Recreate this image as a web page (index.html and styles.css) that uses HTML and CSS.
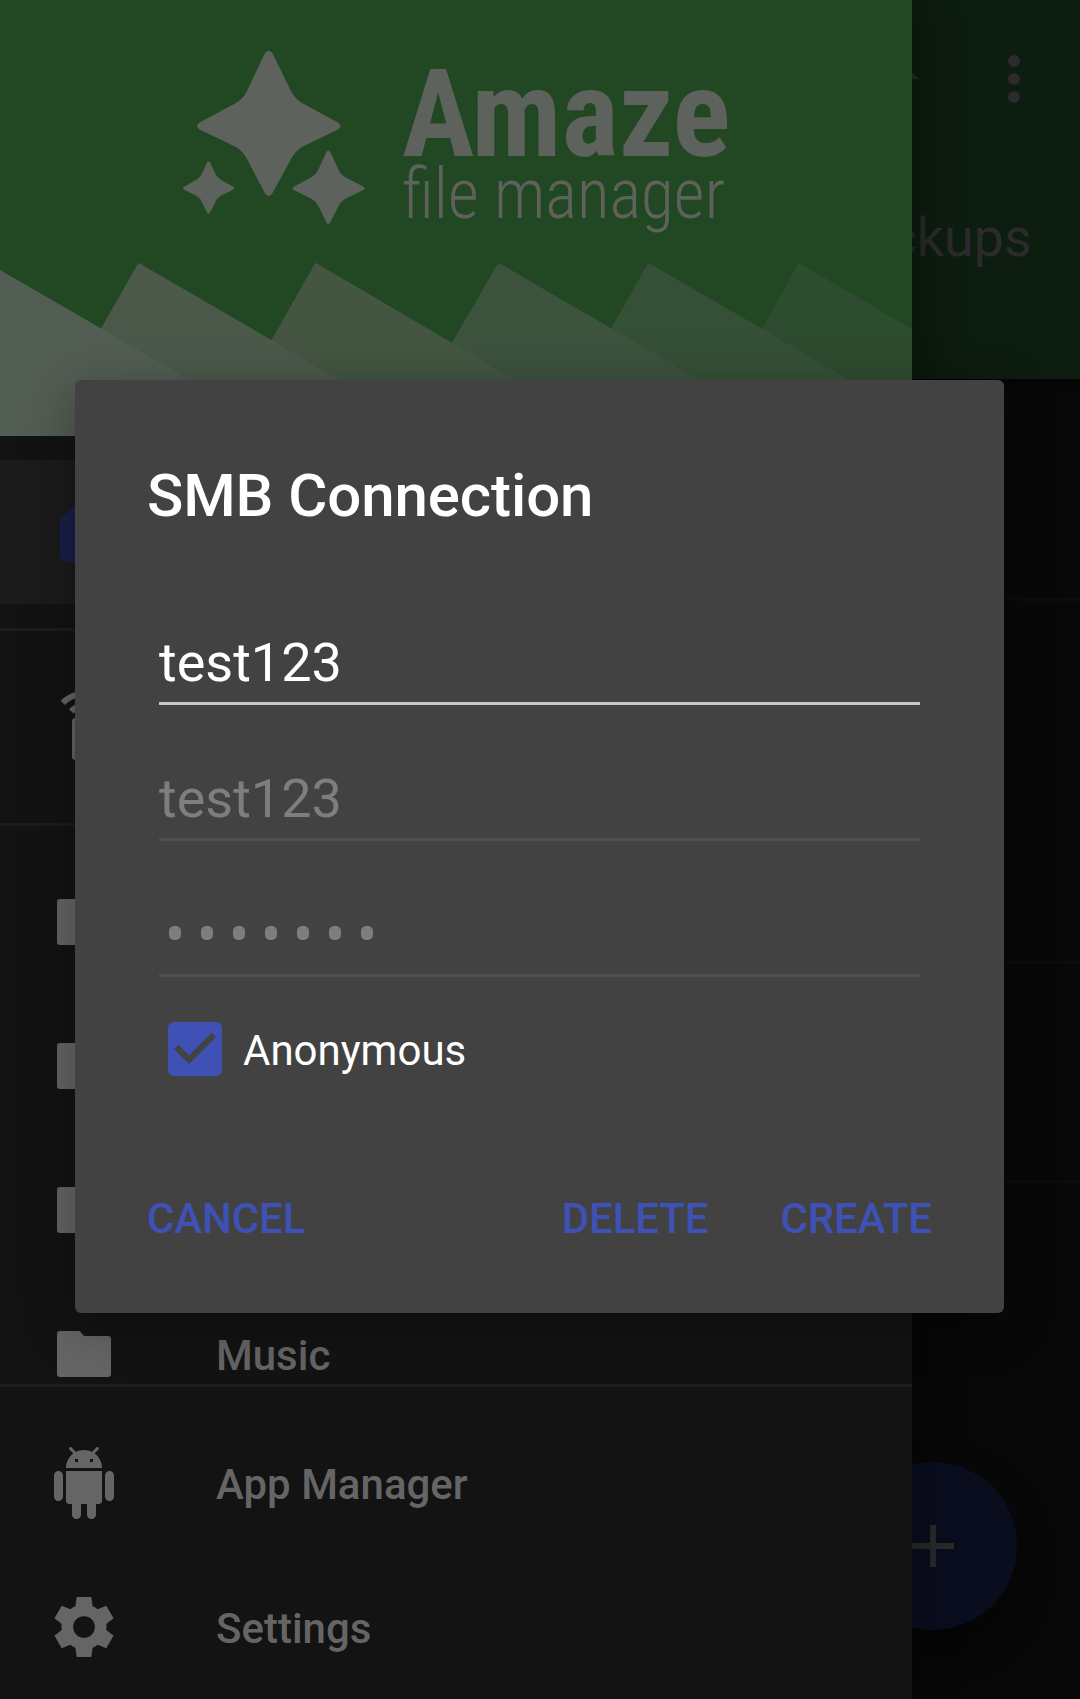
FILE: index.html
```html
<!DOCTYPE html>
<html lang="en">
<head>
<meta charset="utf-8">
<title>Amaze file manager</title>
<link rel="stylesheet" href="styles.css">
</head>
<body>
<div class="screen">
  <main class="browser">
    <header class="toolbar">
      <div class="toolbar-actions">
        <svg width="72" height="72" viewBox="0 0 24 24"><path d="M10 20v-6h4v6h5v-8h3L12 3 2 12h3v8z"/></svg>
        <svg width="72" height="72" viewBox="0 0 24 24"><circle cx="12" cy="6" r="2"/><circle cx="12" cy="12" r="2"/><circle cx="12" cy="18" r="2"/></svg>
      </div>
      <div class="path">ckups</div>
    </header>
    <div class="file-list">
      <div class="file file-first"></div>
      <div class="file file-tall"></div>
      <div class="file"></div>
    </div>
    <button class="fab" aria-label="Add"><svg width="72" height="72" viewBox="0 0 24 24"><path d="M19 13h-6v6h-2v-6H5v-2h6V5h2v6h6z"/></svg></button>
  </main>

  <nav class="drawer">
    <svg class="banner" width="912" height="436" viewBox="0 0 912 436">
      <rect width="912" height="436" fill="#224723"/>
      <path fill="#2e4c2f" d="M798.9 262.7 912 329v107H702z"/>
      <path fill="#365037" d="M648.4 262.7 761.2 328.3 945 436H550z"/>
      <path fill="#3d533e" d="M498.3 262.7 611 328.3 796 436H398z"/>
      <path fill="#445642" d="M315.4 262.7 452 342.7 610 436H217z"/>
      <path fill="#4b594b" d="M138.4 262.7 271.3 340 435 436H40z"/>
      <path fill="#525d53" d="M0 270 100.9 328.3 285 436H0z"/>
      <g fill="#5d625d">
        <path d="M264.8 53.5Q268.7 48 272.6 53.5L290.500 90Q294 98 302 103L338 122.500Q343 126 338 129.500L302 147Q295 151 290.500 160L272.600 193Q268.700 199 264.800 193L247.500 160Q243 151 236 147L199.500 129.500Q194.500 126 199.500 122.500L236 103Q244 98 247.500 90Z"/>
        <path d="M207.200 162.300Q208.600 160.300 210 162.300L215.500 174Q217 177.500 220.500 179.500L233.500 187Q235 188.200 233.500 189.400L220.500 196Q217 198 215.500 202L210 212.400Q208.600 214.400 207.200 212.400L201.700 202Q200.200 198 196.700 196L183.700 189.400Q182.200 188.200 183.700 187L196.700 179.500Q200.200 177.500 201.700 174Z"/>
        <path d="M326.500 152Q328.400 149.200 330.300 152L338.500 169.500Q340.500 174.500 345 177L363.500 186.700Q365.500 188.300 363.500 189.900L345 199Q340.500 201.500 338.500 206L330.300 222.600Q328.400 225.400 326.500 222.600L318.300 206Q316.300 201.500 311.800 199L293.700 189.900Q291.700 188.300 293.700 186.700L311.800 177Q316.300 174.500 318.300 169.500Z"/>
        <text class="brand-name" x="402" y="155.500" textLength="328.500" lengthAdjust="spacingAndGlyphs">Amaze</text>
        <text class="brand-sub" x="402" y="217.700" textLength="323" lengthAdjust="spacingAndGlyphs">ﬁle manager</text>
      </g>
    </svg>

    <div class="menu">
      <section class="group">
        <div class="item item-selected"><svg width="72" height="72" viewBox="0 0 24 24"><path d="M18 2h-8L4 8v12c0 1.100.9 2 2 2h12c1.100 0 2-.9 2-2V4c0-1.100-.9-2-2-2z"/></svg></div>
      </section>
      <section class="group">
        <div class="item"><svg width="72" height="72" viewBox="0 0 24 24"><path d="M15 9H9c-.55 0-1 .45-1 1v12c0 .55.45 1 1 1h6c.55 0 1-.45 1-1V10c0-.55-.45-1-1-1zM7.050 6.050l1.410 1.410C9.370 6.560 10.620 6 12 6s2.630.56 3.540 1.460l1.410-1.410C15.680 4.780 13.930 4 12 4s-3.680.78-4.950 2.050zM12 0C8.960 0 6.210 1.230 4.220 3.220l1.410 1.410C7.260 3.010 9.510 2 12 2s4.740 1.010 6.360 2.640l1.410-1.410C17.790 1.230 15.040 0 12 0z"/></svg></div>
      </section>
      <section class="group">
        <div class="item"><svg width="72" height="72" viewBox="0 0 72 72"><path d="M12 13h20l4 5h24q3 0 3 3v35q0 3-3 3H12q-3 0-3-3V16q0-3 3-3z"/></svg></div>
        <div class="item"><svg width="72" height="72" viewBox="0 0 72 72"><path d="M12 13h20l4 5h24q3 0 3 3v35q0 3-3 3H12q-3 0-3-3V16q0-3 3-3z"/></svg></div>
        <div class="item"><svg width="72" height="72" viewBox="0 0 72 72"><path d="M12 13h20l4 5h24q3 0 3 3v35q0 3-3 3H12q-3 0-3-3V16q0-3 3-3z"/></svg></div>
        <div class="item"><svg width="72" height="72" viewBox="0 0 72 72"><path d="M12 13h19q1 0 1.500 1l3.500 4h24q3 0 3 3v35q0 3-3 3H12q-3 0-3-3V16q0-3 3-3z"/></svg><span>Music</span></div>
      </section>
    </div>
    <div class="drawer-footer">
      <div class="item"><svg width="72" height="72" viewBox="0 0 24 24"><path d="M6 18c0 .55.45 1 1 1h1v3.500c0 .83.67 1.500 1.500 1.500s1.500-.67 1.500-1.500V19h2v3.500c0 .83.67 1.500 1.500 1.500s1.500-.67 1.500-1.500V19h1c.55 0 1-.45 1-1V8H6v10zM3.500 8C2.670 8 2 8.670 2 9.500v7c0 .83.67 1.500 1.500 1.500S5 17.330 5 16.500v-7C5 8.670 4.330 8 3.500 8zm17 0c-.83 0-1.500.67-1.500 1.500v7c0 .83.67 1.500 1.500 1.500s1.500-.67 1.500-1.500v-7c0-.83-.67-1.500-1.500-1.500zm-4.970-5.840l1.300-1.300c.2-.2.2-.51 0-.71-.2-.2-.51-.2-.71 0l-1.480 1.480C13.850 1.230 12.950 1 12 1c-.96 0-1.860.23-2.660.63L7.850.15c-.2-.2-.51-.2-.71 0-.2.2-.2.51 0 .71l1.310 1.310C6.970 3.260 6 5.010 6 7h12c0-1.990-.97-3.750-2.470-4.840zM10 5H9V4h1v1zm5 0h-1V4h1v1z"/></svg><span>App Manager</span></div>
      <div class="item"><svg width="72" height="72" viewBox="0 0 24 24"><path d="M19.430 12.980c.04-.32.07-.64.07-.98s-.03-.66-.07-.98L21.850 9.110 19.430 4.890 16.560 6.050C16.040 5.650 15.480 5.320 14.870 5.070L14.440 2H9.560L9.130 5.070C8.520 5.320 7.960 5.660 7.440 6.050L4.570 4.890 2.150 9.110 4.570 11.020C4.530 11.340 4.500 11.670 4.500 12s.03.66.07.98L2.150 14.890 4.570 19.110 7.440 17.950c.52.4 1.080.73 1.690.98L9.560 22h4.880l.43-3.070c.61-.25 1.170-.59 1.690-.98l2.870 1.160 2.420-4.220zM12 15.600a3.600 3.600 0 1 1 0-7.200 3.600 3.600 0 0 1 0 7.200z"/></svg><span>Settings</span></div>
    </div>
  </nav>

  <div class="dialog" role="dialog">
    <h1>SMB Connection</h1>
    <div class="field">test123</div>
    <div class="field field-disabled">test123</div>
    <div class="field field-disabled field-password"><i></i><i></i><i></i><i></i><i></i><i></i><i></i></div>
    <label class="check">
      <svg width="54" height="54" viewBox="3 3 18 18"><rect x="3" y="3" width="18" height="18" rx="2" fill="#3f51b5"/><path fill="#424242" d="M10 17l-5-5 1.410-1.410L10 14.170l7.590-7.590L19 8z"/></svg>
      <span>Anonymous</span>
    </label>
    <div class="actions"><button>CANCEL</button><span class="spacer"></span><button>DELETE</button><button>CREATE</button></div>
  </div>
</div>
</body>
</html>
```
FILE: styles.css
```css
* { box-sizing: border-box; }
body { margin: 0; background: #070707; font-family: Roboto, sans-serif; }
button { border: 0; padding: 0; background: none; font: inherit; }
svg { display: block; flex: none; }

.screen { display: grid; grid-template-columns: 1080px; grid-template-rows: 1699px; width: 1080px; height: 1699px; overflow: hidden; }
.browser, .drawer, .dialog { grid-area: 1 / 1; }

.browser { position: relative; z-index: 0; display: flex; flex-direction: column; background: #080808; }
.toolbar { height: 379px; background: #0d1d0f; fill: #2b2a2c; color: #2b2a2c; box-shadow: 0 3px 8px rgba(0, 0, 0, .5); }
.toolbar-actions { display: flex; justify-content: flex-end; gap: 53px; padding: 43px 30px 0 0; }
.path { padding: 91px 48px 0 0; text-align: right; font-size: 54px; line-height: 63px; }
.file { height: 219px; border-bottom: 3px solid #0c0c0c; }
.file-first { height: 222px; }
.file-tall { height: 363px; }
.fab { position: absolute; left: 849px; top: 1462px; width: 168px; height: 168px; border-radius: 50%; display: grid; place-items: center; background: #0a0d1e; fill: #2a2a2a; box-shadow: 0 18px 36px rgba(0, 0, 0, .5); }

.drawer { z-index: 1; width: 912px; height: 1699px; display: flex; flex-direction: column; background: #131313; box-shadow: 0 0 48px rgba(0, 0, 0, .45); }
.brand-name { font-size: 122px; font-weight: 700; font-stretch: 75%; }
.brand-sub { font-size: 70px; font-weight: 300; font-stretch: 75%; }
.menu { height: 948px; overflow: hidden; }
.group { padding: 24px 0; border-bottom: 3px solid #1c1c1c; }
.item { display: flex; align-items: center; gap: 96px; height: 144px; padding-left: 48px; color: #656565; fill: #656565; font-size: 42px; font-weight: 500; }
.item span { padding-top: 2px; }
.item-selected { background: #1b1b1b; fill: #191e49; }
.drawer-footer { height: 315px; border-top: 3px solid #1c1c1c; padding-top: 24px; }

.dialog { z-index: 2; justify-self: start; align-self: start; width: 929px; height: 933px; margin: 380px 0 0 75px; padding: 81px 72px 0; border-radius: 6px; background: #424242; color: #fff; box-shadow: 0 12px 54px rgba(0, 0, 0, .32); }
h1 { margin: 0 0 55px; font-size: 60px; line-height: 70px; font-weight: 500; letter-spacing: -.1px; }
.field { height: 119px; margin: 0 12px 17px; padding-top: 45px; border-bottom: 3px solid #c6c6c6; font-size: 54px; line-height: 63px; }
.field-disabled { color: #7e7e7e; border-color: #505050; }
.field-password { display: flex; gap: 20px; padding: 68px 0 0 10px; margin-bottom: 45px; }
.field-password i { width: 12px; height: 14px; border-radius: 5px; background: #7e7e7e; }
.check { display: flex; align-items: center; gap: 21px; height: 54px; margin-left: 21px; font-size: 42px; }
.check span { padding-top: 2px; }
.actions { display: flex; gap: 72px; margin-top: 118px; font-size: 42px; line-height: 50px; font-weight: 500; }
.actions button { color: #3f51b5; letter-spacing: -.1px; }
.spacer { flex: 1; }
```
